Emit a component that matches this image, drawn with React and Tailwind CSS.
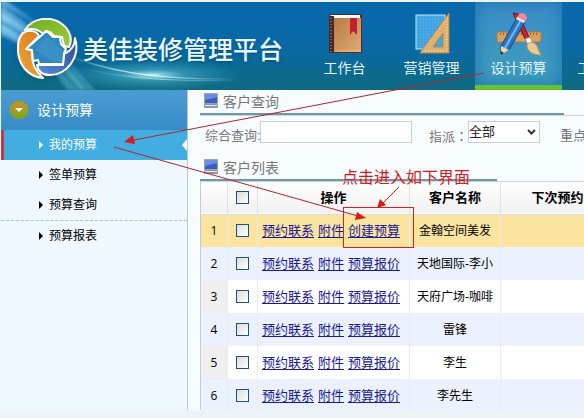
import React from 'react';

const customers = [
  { id: 1, name: '金翰空间美发', action: '创建预算', row: 'bg-[#fbe3a0]', num: 'bg-[#fbe3a0]' },
  { id: 2, name: '天地国际-李小', action: '预算报价', row: 'bg-[#ebf1fd]', num: 'bg-[#ebf1fd]' },
  { id: 3, name: '天府广场-咖啡', action: '预算报价', row: 'bg-white', num: 'bg-[#efefef]' },
  { id: 4, name: '雷锋', action: '预算报价', row: 'bg-[#ebf1fd]', num: 'bg-[#ebf1fd]' },
  { id: 5, name: '李生', action: '预算报价', row: 'bg-white', num: 'bg-[#efefef]' },
  { id: 6, name: '李先生', action: '预算报价', row: 'bg-[#ebf1fd]', num: 'bg-[#ebf1fd]' },
];

function Swoosh() {
  return (
    <svg className="absolute left-0 top-0 w-[330px] h-[88px]" viewBox="0 0 330 88" fill="none">
      <defs>
        <linearGradient id="ray" x1="0" y1="0" x2="1" y2="1">
          <stop offset="0" stopColor="#a9e4ff" stopOpacity="0.6" />
          <stop offset="0.5" stopColor="#6cc5ee" stopOpacity="0.25" />
          <stop offset="1" stopColor="#7fe0ea" stopOpacity="0.3" />
        </linearGradient>
        <linearGradient id="arc" x1="0" y1="0" x2="1" y2="0">
          <stop offset="0" stopColor="#bff3ff" stopOpacity="0" />
          <stop offset="0.5" stopColor="#e2fdff" stopOpacity="0.9" />
          <stop offset="1" stopColor="#bff3ff" stopOpacity="0" />
        </linearGradient>
        <radialGradient id="glow">
          <stop offset="0" stopColor="#e0fcff" stopOpacity="0.85" />
          <stop offset="0.35" stopColor="#6cd0e4" stopOpacity="0.4" />
          <stop offset="1" stopColor="#3fb5d0" stopOpacity="0" />
        </radialGradient>
        <filter id="soft">
          <feGaussianBlur stdDeviation="1" />
        </filter>
      </defs>
      <g filter="url(#soft)">
        <path d="M0 4 C30 22 62 50 94 88 L72 88 C50 62 26 44 0 34z" fill="url(#ray)" />
        <path d="M0 10 C30 26 58 52 84 88 L80 88 C54 56 28 32 0 18z" fill="url(#ray)" />
        <path d="M0 22 C30 38 52 58 72 88 L66 88 C46 60 24 42 0 30z" fill="url(#ray)" />
        <path d="M0 -4 C22 8 40 22 56 40 C36 26 18 12 0 4z" fill="url(#ray)" />
      </g>
      <ellipse cx="152" cy="73" rx="90" ry="16" fill="url(#glow)" />
      <ellipse cx="152" cy="73" rx="26" ry="5" fill="url(#glow)" />
      <path d="M58 50 C100 68 150 78 235 77" stroke="url(#arc)" strokeWidth="1.5" />
      <path d="M80 66 C120 76 170 80 240 78" stroke="url(#arc)" strokeWidth="1" opacity="0.6" />
    </svg>
  );
}

function Logo() {
  return (
    <svg className="relative w-[62px] h-[64px] shrink-0 drop-shadow-md" viewBox="17 18 62 64" fill="none">
      <defs>
        <linearGradient id="green" x1="0" y1="0" x2="1" y2="1">
          <stop stopColor="#6fae1e" />
          <stop offset="1" stopColor="#9ccb3c" />
        </linearGradient>
        <linearGradient id="orange" x1="1" y1="0" x2="0" y2="1">
          <stop stopColor="#d9791c" />
          <stop offset="1" stopColor="#f3a637" />
        </linearGradient>
        <linearGradient id="blue" x1="1" y1="0" x2="0" y2="1">
          <stop stopColor="#2a4fa0" />
          <stop offset="1" stopColor="#5b8ad0" />
        </linearGradient>
      </defs>
      <g stroke="#fff" strokeWidth="2" strokeLinejoin="round">
        <path d="M25 30 C32 18 50 15 62 24 C70 30 73 39 69 47 L64 46 L62 37 L54 36 L50 32 L46 31 L43 34 C38 29 32 28 25 30z" fill="url(#green)" />
        <path d="M23 33 C29 29 37 31 39 36 L27 48 L32 51 C31 62 35 71 43 78 C28 77 17 64 18 47 C18 41 20 36 23 33z" fill="url(#orange)" />
        <path d="M75 38 C81 58 66 75 50 75 C42 75 38 71 37 65 L63 65 L64 54 C71 51 75 46 75 38z" fill="url(#blue)" />
        <path d="M26 49 L43 34 L46 31 L50 34 L53 37 L60 37 L61 44 L66 49 L64 53 L63 64 L39 64 L38 60 L33 61 L32 50z" fill="#2f87bd" />
      </g>
      <path d="M36 50 L47 36 L62 51 L61 62 L54 62z" fill="#56aad6" opacity="0.3" />
    </svg>
  );
}

function BookIcon() {
  return (
    <svg className="w-[36px] h-[42px]" viewBox="0 0 36 42" fill="none">
      <defs>
        <linearGradient id="cover" x1="0" y1="0" x2="1" y2="1">
          <stop stopColor="#b87a45" />
          <stop offset="1" stopColor="#e0ab73" />
        </linearGradient>
      </defs>
      <rect x="2" y="1" width="33" height="39" rx="1" fill="#542d20" />
      <path d="M3 2 H33 V5 H5z" fill="#fff" />
      <rect x="6" y="5" width="28" height="34" fill="url(#cover)" />
      <rect x="2" y="3" width="5" height="36" fill="#49291f" />
      <path d="M4 5 V39" stroke="#b8aaa2" strokeWidth="1" strokeDasharray="1 2" />
      <path d="M8 38 H34" stroke="#e8bc85" />
      <path d="M23 5 H30 V22 L26 18 L23 22z" fill="#c5202f" />
    </svg>
  );
}

function RulerIcon() {
  return (
    <svg className="w-[36px] h-[42px]" viewBox="0 0 36 42" fill="none">
      <defs>
        <pattern id="grid" width="3" height="3" patternUnits="userSpaceOnUse">
          <rect width="3" height="3" fill="#3ba2e0" />
          <path d="M0 0 H3 M0 0 V3" stroke="#55b0e8" strokeWidth="1" />
        </pattern>
      </defs>
      <rect x="2" y="2" width="29" height="34" fill="url(#grid)" stroke="#bfeaff" />
      <path d="M35 0 V40 H6z M29 20 L19 34 H29z" fill="#deb170" fillRule="evenodd" stroke="#b98645" strokeWidth="1" />
      <path d="M8 38 H34 M33 5 V37" stroke="#fae2ad" strokeDasharray="1 2" />
      <path d="M31 8 L10 36" stroke="#f5d599" strokeDasharray="1 2" />
    </svg>
  );
}

function DesignIcon() {
  return (
    <svg className="w-[46px] h-[44px]" viewBox="0 0 46 44" fill="none">
      <rect x="1" y="20" width="44" height="10" rx="1" fill="#d9a25a" stroke="#b07a3c" />
      <path d="M4 22 H43" stroke="#8c6232" strokeWidth="2" strokeDasharray="1 2" />
      <path d="M17 1 L22 2 L35 29 L31 31z" fill="#c91f2e" stroke="#74121c" />
      <path d="M29 27 L34 25 L37 31 L32 33z" fill="#f2f2f2" stroke="#999" />
      <path d="M31 33 C33 29 39 30 41 34 C42 38 44 41 45 43 C38 43 31 40 31 33z" fill="#efc98c" stroke="#c4965a" />
      <path d="M21 6 L29 10 L13 38 L5 42 L5 34z" fill="#2b76c4" stroke="#164677" />
      <path d="M25 8 L9 36" stroke="#7cb7ec" strokeWidth="2" />
      <path d="M5 34 L13 38 L5 43z" fill="#f4d5a0" />
      <path d="M5 39 L8 41 L5 43z" fill="#333" />
      <path d="M20 7 L23 2 C27 0 31 3 31 6 L28 11z" fill="#ef8b9c" />
      <path d="M20 7 L21 5 L29 9 L28 11z" fill="#e6e6e6" />
    </svg>
  );
}

function MonitorIcon() {
  return (
    <svg className="w-[14px] h-[15px] -mt-[2px]" viewBox="0 0 14 15" fill="none">
      <rect x="0" y="0" width="14" height="11" rx="1" fill="#9aa3ae" />
      <rect x="1" y="1" width="12" height="9" fill="#3a5fc0" />
      <path d="M1 1 H13 V4 L1 7z" fill="#6b8ee0" />
      <rect x="0" y="11" width="14" height="4" rx="1" fill="#8e969e" />
      <path d="M1 12 H13 V13 H1z" fill="#e6eaed" />
    </svg>
  );
}

function NavItem({ icon, label, active }) {
  return (
    <a
      href="#"
      className={
        active
          ? 'w-[87px] h-full shrink-0 flex flex-col items-center pt-[9px] border-b-[5px] border-[#66c32b] bg-linear-to-b from-[#3b8dc8] to-[#3f9dbb] shadow-[inset_0_0_16px_#1b73b0]'
          : 'w-[87px] h-full shrink-0 flex flex-col items-center pt-[9px]'
      }
    >
      <span className="h-[46px] flex items-center">{icon}</span>
      <span className="text-[14px] leading-[22px] whitespace-nowrap text-[#e4f6ff]">{label}</span>
    </a>
  );
}

function MenuItem({ label, active }) {
  return (
    <a
      href="#"
      className={
        active
          ? 'relative h-[30px] flex items-center gap-[6px] pl-[35px] border-l-[3px] border-[#c03a48] bg-[#42ade0] text-white'
          : 'h-[30px] flex items-center gap-[6px] pl-[38px] text-black'
      }
    >
      <svg className="w-[4px] h-[8px]" viewBox="0 0 4 8">
        <path d="M0 0 L4 4 L0 8z" fill="currentColor" />
      </svg>
      <span className="text-[12px] leading-[20px]">{label}</span>
      {active && (
        <svg className="absolute right-0 top-[9px] w-[5px] h-[12px]" viewBox="0 0 5 12">
          <path d="M5 0 L0 6 L5 12z" fill="#fff" />
        </svg>
      )}
    </a>
  );
}

function SectionTitle({ title, line }) {
  return (
    <div>
      <h2 className="h-[23px] flex items-center gap-[5px] pl-1 text-[14px] leading-[20px] text-[#777]">
        <MonitorIcon />
        {title}
      </h2>
      <div className="border-b border-[#ccd6dc]">
        <div className={line}></div>
      </div>
    </div>
  );
}

function Check({ label }) {
  return (
    <input
      type="checkbox"
      aria-label={label}
      className="block mx-auto appearance-none w-[13px] h-[13px] border border-[#1c5180] bg-linear-to-br from-[#dcdcd7] to-white"
    />
  );
}

function Annotations() {
  return (
    <div className="absolute inset-0 pointer-events-none">
      <svg className="absolute left-0 top-0 w-[584px] h-[418px]" viewBox="0 0 584 418" fill="none">
        <g stroke="#b5242c" strokeWidth="1">
          <path d="M484 73 L134 140" />
          <path d="M114 147 L358 216" />
          <path d="M399 187 L382 204" stroke="#e01818" />
        </g>
        <g fill="#d81a1a">
          <path d="M124 142 L133 135 L135 144z" />
          <path d="M366 218 L355 220 L357 212z" />
          <path d="M377 208 L380 199 L386 205z" />
        </g>
        <rect x="343.5" y="207.5" width="70" height="40" stroke="#d8201c" />
      </svg>
      <p className="absolute left-[342px] top-[167px] text-[16px] leading-[22px] whitespace-nowrap text-[#e01818]">
        点击进入如下界面
      </p>
    </div>
  );
}

function App() {
  return (
    <div className="relative h-screen overflow-hidden flex flex-col pt-[2px] pb-2 pl-px bg-[#eef5fa] font-['Liberation_Sans','Noto_Sans_CJK_SC',sans-serif]">
      <header className="relative h-[88px] shrink-0 flex overflow-hidden bg-linear-to-b from-[#0768ad] via-[#0a69a5] to-[#0f6a80]">
        <Swoosh />
        <div className="relative w-[300px] shrink-0 flex items-center pl-4 pt-2">
          <Logo />
          <h1 className="ml-1 text-[25px] leading-[36px] whitespace-nowrap text-[#e6f7ff] font-medium text-shadow-md">美佳装修管理平台</h1>
        </div>
        <nav className="relative flex">
          <NavItem icon={<BookIcon />} label="工作台" />
          <NavItem icon={<RulerIcon />} label="营销管理" />
          <NavItem icon={<DesignIcon />} label="设计预算" active />
          <NavItem label="工程管理" />
        </nav>
      </header>

      <div className="flex-1 min-h-0 flex">
        <aside className="w-[187px] shrink-0 bg-[#eff8fe] border-r border-[#b5cbd9]">
          <div className="h-[40px] flex items-center gap-2 pl-2 bg-linear-to-b from-[#4a9dd2] to-[#378cc6] text-white">
            <svg className="w-[20px] h-[21px]" viewBox="0 0 20 21">
              <defs>
                <linearGradient id="ball" x1="0" y1="0" x2="0" y2="1">
                  <stop stopColor="#cf9022" />
                  <stop offset="1" stopColor="#70aa20" />
                </linearGradient>
              </defs>
              <circle cx="10" cy="10" r="9" fill="url(#ball)" stroke="#8d9b36" />
              <path d="M6 8 H14 L10 12z" fill="#fff" />
            </svg>
            <span className="text-[14px] leading-[22px]">设计预算</span>
          </div>
          <MenuItem label="我的预算" active />
          <MenuItem label="签单预算" />
          <MenuItem label="预算查询" />
          <div className="border-t border-dashed border-[#a9c3cf]">
            <MenuItem label="预算报表" />
          </div>
        </aside>

        <main className="flex-1 min-w-0 pl-3 overflow-hidden bg-[#f7fcff]">
          <SectionTitle title="客户查询" line="h-[2px] w-[364px] bg-[#6f97a9]" />
          <form className="flex items-center pt-[5px] pl-[5px] text-[13px] leading-[22px] whitespace-nowrap text-[#777]">
            <label htmlFor="keyword" className="w-[55px] shrink-0 pt-1 -mb-1">综合查询:</label>
            <input id="keyword" type="text" className="w-[152px] h-[22px] shrink-0 border border-[#c9cdd0] bg-white" />
            <label htmlFor="assign" className="w-[39px] ml-[17px] shrink-0 pt-1 -mb-1 font-['Noto_Sans_CJK_TC',sans-serif]">指派：</label>
            <span className="relative shrink-0">
              <select id="assign" className="block appearance-none w-[72px] h-[22px] border border-[#c9cdd0] bg-white leading-[20px] text-[#222]">
                <option>全部</option>
              </select>
              <svg className="absolute right-1 top-[8px] w-[9px] h-[6px]" viewBox="0 0 9 6" fill="none">
                <path d="M1 1 L4.5 4.5 L8 1" stroke="#333" strokeWidth="2" />
              </svg>
            </span>
            <span className="ml-5 pt-1 -mb-1">重点</span>
          </form>

          <div className="pt-[13px]">
            <SectionTitle title="客户列表" line="h-[2px] w-[297px] bg-[#6f97a9]" />
          </div>
          <table className="table-fixed w-[414px] border-l border-[#c3ccd2] text-[12px] leading-[18px] text-center text-black whitespace-nowrap">
            <colgroup>
              <col className="w-[27px]" />
              <col className="w-[30px]" />
              <col className="w-[152px]" />
              <col className="w-[91px]" />
              <col />
            </colgroup>
            <thead>
              <tr className="h-[32px] bg-linear-to-b from-white to-[#f1f1f1] border-b border-[#d9d9d9] text-[13px]">
                <th className="border-r border-[#e2e2e2]"></th>
                <th className="border-r border-[#e2e2e2]"><Check label="全选" /></th>
                <th className="border-r border-[#e2e2e2]">操作</th>
                <th className="border-r border-[#e2e2e2]">客户名称</th>
                <th>下次预约</th>
              </tr>
            </thead>
            <tbody>
              {customers.map((c) => (
                <tr key={c.id} className={`h-[33px] ${c.row}`}>
                  <td className={`border-r border-[#e9edf2] font-['Open_Sans',sans-serif] ${c.num}`}>{c.id}</td>
                  <td className="border-r border-[#e9edf2]"><Check label={c.name} /></td>
                  <td className="border-r border-[#e9edf2] text-[13px] text-[#1a1a99]">
                    <div className="flex gap-1 pl-1 underline underline-offset-2">
                      <a href="#">预约联系</a>
                      <a href="#">附件</a>
                      <a href="#">{c.action}</a>
                    </div>
                  </td>
                  <td className="border-r border-[#e9edf2]">{c.name}</td>
                  <td></td>
                </tr>
              ))}
            </tbody>
          </table>
        </main>
      </div>

      <Annotations />
    </div>
  );
}

export default App;
